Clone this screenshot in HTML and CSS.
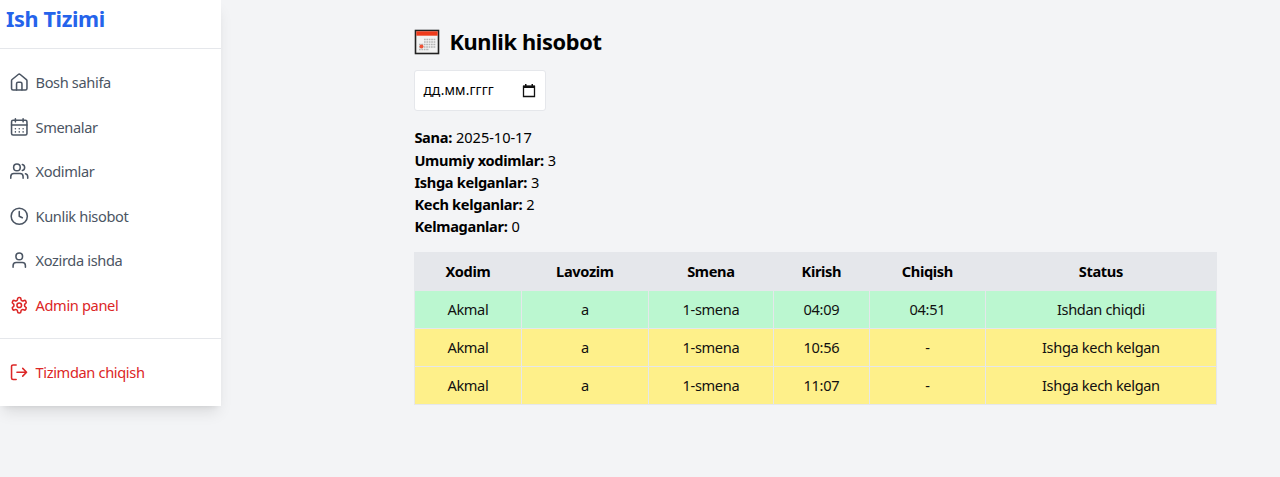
FILE: index.html
```html
<!DOCTYPE html>
<html lang="uz">
<head>
<meta charset="utf-8">
<title>Ish Tizimi</title>
<link rel="stylesheet" href="styles.css">
</head>
<body>
<aside class="sidebar">
  <div class="brand"><span>Ish Tizimi</span></div>
  <nav class="nav">
    <a class="link"><svg class="icon" viewBox="0 0 24 24"><path d="M15.5 22v-8a2 2 0 0 0-2-2h-3a2 2 0 0 0-2 2v8"/><path d="M2 10a2 2 0 0 1 .709-1.528l8-6.5a2 2 0 0 1 2.582 0l8 6.5A2 2 0 0 1 22 10v10a2 2 0 0 1-2 2H4a2 2 0 0 1-2-2z"/></svg><span>Bosh sahifa</span></a>
    <a class="link"><svg class="icon" viewBox="0 0 24 24"><path d="M7 1v4M17 1v4"/><rect width="20" height="19" x="2" y="3" rx="2"/><path d="M2 9h20M7 14h.01M12 14h.01M17 14h.01M7 18h.01M12 18h.01M17 18h.01"/></svg><span>Smenalar</span></a>
    <a class="link"><svg class="icon" viewBox="0 0 24 24"><path d="M17 21v-2a4 4 0 0 0-4-4H5a4 4 0 0 0-4 4v2"/><circle cx="9" cy="7" r="4.3"/><path d="M23 21v-2a4 4 0 0 0-3-3.87M16 3.13a4 4 0 0 1 0 7.75"/></svg><span>Xodimlar</span></a>
    <a class="link"><svg class="icon" viewBox="0 0 24 24"><circle cx="12" cy="12" r="10.5"/><path d="M12 6v6l4 2"/></svg><span>Kunlik hisobot</span></a>
    <a class="link"><svg class="icon" viewBox="0 0 24 24"><circle cx="12" cy="7" r="4.3"/><path d="M20 21v-2a4 4 0 0 0-4-4H8a4 4 0 0 0-4 4v2"/></svg><span>Xozirda ishda</span></a>
    <a class="link danger"><svg class="icon" viewBox="0 0 24 24"><path d="M12.22 2h-.44a2 2 0 0 0-2 2v.18a2 2 0 0 1-1 1.73l-.43.25a2 2 0 0 1-2 0l-.15-.08a2 2 0 0 0-2.73.73l-.22.38a2 2 0 0 0 .73 2.73l.15.1a2 2 0 0 1 1 1.72v.51a2 2 0 0 1-1 1.74l-.15.09a2 2 0 0 0-.73 2.73l.22.38a2 2 0 0 0 2.73.73l.15-.08a2 2 0 0 1 2 0l.43.25a2 2 0 0 1 1 1.73V20a2 2 0 0 0 2 2h.44a2 2 0 0 0 2-2v-.18a2 2 0 0 1 1-1.73l.43-.25a2 2 0 0 1 2 0l.15.08a2 2 0 0 0 2.73-.73l.22-.39a2 2 0 0 0-.73-2.73l-.15-.08a2 2 0 0 1-1-1.74v-.5a2 2 0 0 1 1-1.74l.15-.09a2 2 0 0 0 .73-2.73l-.22-.38a2 2 0 0 0-2.73-.73l-.15.08a2 2 0 0 1-2 0l-.43-.25a2 2 0 0 1-1-1.73V4a2 2 0 0 0-2-2z"/><circle cx="12" cy="12" r="3"/></svg><span>Admin panel</span></a>
  </nav>
  <div class="logout">
    <a class="link danger"><svg class="icon" viewBox="0 0 24 24"><path d="M8 21.500H4a2 2 0 0 1-2-2V4.500a2 2 0 0 1 2-2h4M16.500 17l5-5-5-5M21.500 12H9"/></svg><span>Tizimdan chiqish</span></a>
  </div>
</aside>
<main class="report">
  <h1 class="heading">
    <svg class="emoji" viewBox="0 0 26 26"><rect x="1.5" y="1.5" width="23" height="23" fill="#f2f2f2" stroke="#222" stroke-width="1.6"/><path d="M2.3 2.3h21.400v4.400h-21.400z" fill="#ee3b1c"/><path d="M10 10.5h12M10 13h12M5 15.5h17M5 18h17M5 20.5h10" stroke="#b5b5b5" stroke-width="1.5" stroke-dasharray="1.7 .7"/><circle cx="7.5" cy="17.5" r="2" fill="#f05236"/></svg>
    <span>Kunlik hisobot</span>
  </h1>
  <div class="date"><span>дд.мм.гггг</span><svg class="picker" viewBox="0 0 14 14"><path d="M1.500 2.500h11v10h-11z" fill="none" stroke="#111" stroke-width="1.3"/><path d="M1 1.500h12v2.500H1zM3 0h1.500v2H3zM9.500 0H11v2H9.500z" fill="#111"/></svg></div>
  <div class="summary">
    <p><b>Sana:</b> <span class="iso">2025-10-17</span></p>
    <p><b>Umumiy xodimlar:</b> 3</p>
    <p><b>Ishga kelganlar:</b> 3</p>
    <p><b>Kech kelganlar:</b> 2</p>
    <p><b>Kelmaganlar:</b> 0</p>
  </div>
  <table class="table">
    <colgroup><col class="c1"><col class="c2"><col class="c3"><col class="c4"><col class="c5"><col class="c6"></colgroup>
    <thead><tr><th>Xodim</th><th>Lavozim</th><th>Smena</th><th>Kirish</th><th>Chiqish</th><th>Status</th></tr></thead>
    <tbody>
      <tr class="left"><td>Akmal</td><td>a</td><td>1-smena</td><td>04:09</td><td>04:51</td><td>Ishdan chiqdi</td></tr>
      <tr class="late"><td>Akmal</td><td>a</td><td>1-smena</td><td>10:56</td><td>-</td><td>Ishga kech kelgan</td></tr>
      <tr class="late"><td>Akmal</td><td>a</td><td>1-smena</td><td>11:07</td><td>-</td><td>Ishga kech kelgan</td></tr>
    </tbody>
  </table>
</main>
</body>
</html>
```
FILE: styles.css
```css
* { box-sizing: border-box; }
body {
  margin: 0;
  height: 477px;
  overflow: hidden;
  display: flex;
  align-items: flex-start;
  background: #f3f4f6;
  color: #000;
  font: 14.6px/22.25px "Noto Sans", "Open Sans", sans-serif;
  letter-spacing: -0.35px;
}
.sidebar {
  width: 221px;
  height: 406px;
  flex: none;
  background: #fff;
  box-shadow: 0 9px 14px -3px rgba(0, 0, 0, .1), 0 4px 6px -4px rgba(0, 0, 0, .1);
}
.brand {
  height: 49px;
  padding: 4px 6px;
  border-bottom: 1px solid #e5e7eb;
  color: #2563eb;
  font-size: 21.6px;
  font-weight: 700;
  line-height: 30px;
}
.nav {
  height: 289px;
  padding: 15px 9.5px 0;
  display: flex;
  flex-direction: column;
  gap: 7.5px;
}
.link {
  height: 37px;
  display: flex;
  align-items: center;
  gap: 7.5px;
  color: #4b5563;
}
.icon {
  width: 18.5px;
  height: 18.5px;
  flex: none;
  overflow: visible;
  fill: none;
  stroke: currentColor;
  stroke-width: 2;
  stroke-linecap: round;
  stroke-linejoin: round;
}
.danger { color: #dc2626; }
.logout { border-top: 1px solid #e5e7eb; padding: 15px 9.5px; }
.report { width: 802px; margin-left: 193.4px; padding-top: 26px; }
.heading {
  margin: 0;
  height: 31px;
  display: flex;
  align-items: center;
  gap: 9px;
  font-size: 21.8px;
  line-height: 31px;
}
.emoji { width: 26px; height: 26px; }
.date {
  width: 132px;
  height: 41px;
  margin-top: 13px;
  padding: 0 9px 0 8px;
  display: flex;
  align-items: center;
  justify-content: space-between;
  background: #fff;
  border: 1px solid #e5e7eb;
  border-radius: 3px;
  font-size: 13.6px;
  letter-spacing: .15px;
}
.picker { width: 14px; height: 14px; }
.summary { margin-top: 15.4px; }
.summary p { margin: 0; }
.summary b { letter-spacing: -.31px; margin-right: .6px; }
.iso { letter-spacing: -.05px; }
.table {
  width: 802px;
  margin-top: 14.3px;
  table-layout: fixed;
  border-collapse: collapse;
  text-align: center;
}
.c1 { width: 107px; }
.c2 { width: 127px; }
.c3 { width: 125px; }
.c4 { width: 96px; }
.c5 { width: 116px; }
.c6 { width: 231px; }
th, td { height: 38px; padding: 0 1px 1px 0; border: 1px solid #e5e7eb; }
th { background: #e5e7eb; }
.left { background: #bbf7d0; }
.late { background: #fef08a; }
td { color: #111; }
```
